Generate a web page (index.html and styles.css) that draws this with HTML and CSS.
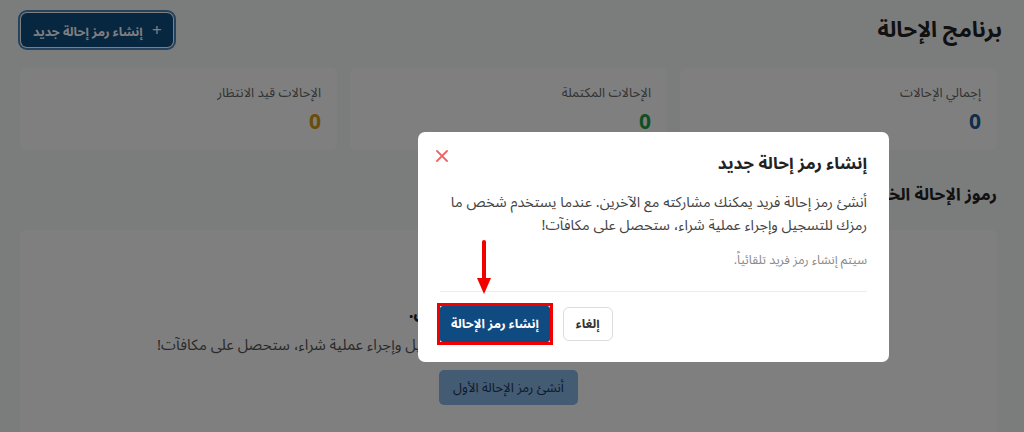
FILE: index.html
```html
<!DOCTYPE html>
<html lang="ar" dir="rtl">
<head>
  <meta charset="UTF-8">
  <meta name="viewport" content="width=device-width, initial-scale=1.0">
  <title>برنامج الإحالة</title>
  <link rel="stylesheet" href="styles.css">
</head>
<body>

<div class="page">
  <!-- رأس الصفحة -->
  <div class="page-header">
    <h1 class="page-title">برنامج الإحالة</h1>
    <button class="new-button"><span class="plus">+</span> إنشاء رمز إحالة جديد</button>
  </div>

  <!-- بطاقات الإحصائيات -->
  <div class="stats">
    <div class="stat-card">
      <div class="stat-label">إجمالي الإحالات</div>
      <div class="stat-value blue">0</div>
    </div>
    <div class="stat-card">
      <div class="stat-label">الإحالات المكتملة</div>
      <div class="stat-value green">0</div>
    </div>
    <div class="stat-card">
      <div class="stat-label">الإحالات قيد الانتظار</div>
      <div class="stat-value amber">0</div>
    </div>
  </div>

  <h2 class="section-title">رموز الإحالة الخاصة بك</h2>

  <div class="empty-card">
    <div class="empty-title">لا توجد رموز إحالة حتى الآن.</div>
    <p class="empty-text">أنشئ رمز إحالة وشاركه مع أصدقائك. عندما يستخدم شخص ما رمزك للتسجيل وإجراء عملية شراء، ستحصل على مكافآت!</p>
    <button class="first-button">أنشئ رمز الإحالة الأول</button>
  </div>
</div>

<!-- خلفية النافذة المنبثقة -->
<div class="overlay">
  <div class="modal">
    <div class="modal-header">
      <h3 class="modal-title">إنشاء رمز إحالة جديد</h3>
      <svg class="close" width="12" height="12" viewBox="0 0 12 12">
        <path d="M1 1 L11 11 M11 1 L1 11" stroke="#f06464" stroke-width="1.8" stroke-linecap="round"/>
      </svg>
    </div>
    <p class="modal-text">أنشئ رمز إحالة فريد يمكنك مشاركته مع الآخرين. عندما يستخدم شخص ما رمزك للتسجيل وإجراء عملية شراء، ستحصل على مكافآت!</p>
    <p class="modal-note">سيتم إنشاء رمز فريد تلقائياً.</p>
    <div class="modal-footer">
      <button class="cancel-button">إلغاء</button>
      <span class="mark"><button class="create-button">إنشاء رمز الإحالة</button></span>
    </div>
  </div>

  <!-- سهم التوضيح -->
  <svg class="arrow" width="16" height="56" viewBox="0 0 16 56">
    <line x1="8" y1="2" x2="8" y2="40" stroke="#f20000" stroke-width="4" stroke-linecap="round"/>
    <polygon points="1,38 15,38 8,54" fill="#f20000"/>
  </svg>
</div>

</body>
</html>
```

FILE: styles.css
```css
* {
  box-sizing: border-box;
}
body {
  margin: 0;
  background-color: #f7f8f9;
  font-family: "Noto Sans Arabic", "DejaVu Sans", sans-serif;
  color: #222;
  height: 432px;
  overflow: hidden;
}
button {
  font-family: inherit;
  cursor: pointer;
}
.page {
  padding: 13px 27px 0 20px;
}
/* رأس الصفحة */
.page-header {
  display: flex;
  justify-content: space-between;
  align-items: center;
  height: 34px;
  margin-left: 1px;
  margin-right: -5px;
}
.page-title {
  margin: 0;
  font-size: 22px;
  line-height: 34px;
  font-weight: 700;
  color: #222;
}
.new-button {
  height: 34px;
  padding: 0 11px 0 12px;
  border: none;
  border-radius: 6px;
  background-color: #0f4c81;
  color: #fff;
  font-size: 12.5px;
  font-weight: 700;
  box-shadow: 0 0 0 1px #fff, 0 0 0 3px #4a86be;
}
.plus {
  font-size: 17px;
  font-weight: 400;
  margin-left: 6px;
}
/* بطاقات الإحصائيات */
.stats {
  display: grid;
  grid-template-columns: repeat(3, 1fr);
  gap: 13px;
  margin-top: 21px;
}
.stat-card {
  background-color: #fff;
  border-radius: 6px;
  height: 82px;
  padding: 15px 16px;
}
.stat-label {
  font-size: 13px;
  line-height: 20px;
  color: #666;
}
.stat-value {
  font-size: 21px;
  line-height: 28px;
  font-weight: 700;
  margin-top: 5px;
}
.blue {
  color: #1c5c98;
}
.green {
  color: #1fa04c;
}
.amber {
  color: #d49a10;
}
/* قسم الرموز */
.section-title {
  margin: 32px 0 0;
  font-size: 17px;
  line-height: 26px;
  font-weight: 700;
  color: #222;
}
.empty-card {
  background-color: #fff;
  border-radius: 6px;
  margin-top: 22px;
  height: 210px;
  padding-top: 70px;
  text-align: center;
}
.empty-title {
  font-size: 17px;
  line-height: 26px;
  font-weight: 700;
  color: #222;
}
.empty-text {
  margin: 7px 0 0;
  font-size: 15px;
  line-height: 24px;
  color: #555;
}
.first-button {
  margin-top: 13px;
  height: 35px;
  padding: 0 14px;
  border: none;
  border-radius: 5px;
  background-color: #86b6e6;
  color: #1e3550;
  font-size: 13px;
}
/* النافذة المنبثقة */
.overlay {
  position: fixed;
  inset: 0;
  background-color: rgba(0, 0, 0, 0.5);
}
.modal {
  position: absolute;
  left: 418px;
  top: 132px;
  width: 471px;
  background-color: #fff;
  border-radius: 7px;
  padding: 20px 22px 17px 22px;
}
.modal-header {
  display: flex;
  justify-content: space-between;
  align-items: flex-start;
}
.modal-title {
  margin: 0;
  font-size: 17px;
  line-height: 24px;
  font-weight: 700;
  color: #222;
}
.close {
  margin-top: -2px;
  margin-left: -4px;
}
.modal-text {
  margin: 15px 0 0;
  font-size: 14.5px;
  line-height: 23px;
  color: #444;
}
.modal-note {
  margin: 14px 0 0;
  font-size: 12.5px;
  line-height: 18px;
  color: #8a8a8a;
}
.modal-footer {
  display: flex;
  justify-content: flex-end;
  align-items: center;
  gap: 10px;
  margin-top: 22px;
  padding-top: 11px;
  border-top: 1px solid #ececec;
}
.cancel-button {
  height: 34px;
  padding: 0 12px;
  background-color: #fff;
  border: 1px solid #dcdcdc;
  border-radius: 6px;
  color: #333;
  font-size: 12.5px;
  font-weight: 700;
}
.mark {
  display: flex;
  border: 3px solid #f20000;
  margin-left: -3px;
}
.create-button {
  height: 36px;
  padding: 0 11px;
  background-color: #0f4a80;
  border: none;
  border-radius: 3px;
  color: #fff;
  font-size: 12.5px;
  font-weight: 700;
}
.arrow {
  position: absolute;
  left: 476px;
  top: 240px;
}
```
